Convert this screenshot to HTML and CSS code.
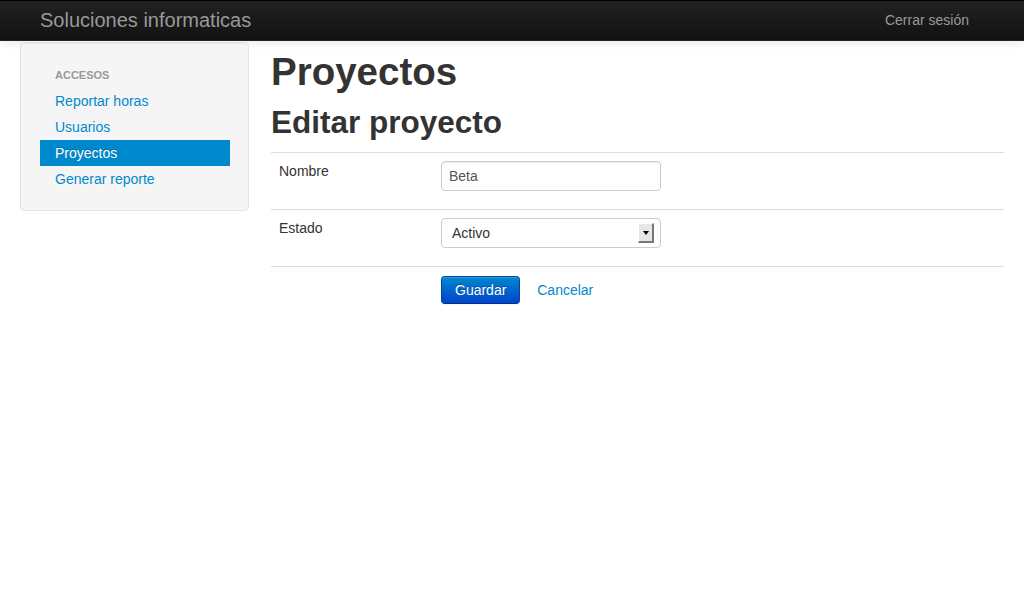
FILE: index.html
```html
<!DOCTYPE html>
<html lang="es">
<head>
<meta charset="utf-8">
<title>Proyectos</title>
<link rel="stylesheet" href="styles.css">
</head>
<body>
<header class="navbar">
  <a class="brand" href="#">Soluciones informaticas</a>
  <a class="nav-link" href="#">Cerrar sesión</a>
</header>
<div class="page">
  <aside class="well">
    <ul class="nav-list">
      <li class="nav-header">Accesos</li>
      <li><a href="#">Reportar horas</a></li>
      <li><a href="#">Usuarios</a></li>
      <li class="active"><a href="#">Proyectos</a></li>
      <li><a href="#">Generar reporte</a></li>
    </ul>
  </aside>
  <main class="content">
    <h1 class="title">Proyectos</h1>
    <h2 class="subtitle">Editar proyecto</h2>
    <form class="form-table">
      <div class="form-row">
        <label class="form-label" for="nombre">Nombre</label>
        <div class="form-field"><input id="nombre" class="input" type="text" value="Beta"></div>
      </div>
      <div class="form-row">
        <label class="form-label" for="estado">Estado</label>
        <div class="form-field">
          <div class="select-wrap">
            <select id="estado" class="select"><option>Activo</option><option>Inactivo</option></select>
            <span class="select-arrow"><span class="tri"></span></span>
          </div>
        </div>
      </div>
      <div class="form-row actions">
        <div class="form-label"></div>
        <div class="form-field">
          <button type="button" class="btn btn-primary">Guardar</button>
          <a class="btn-link" href="#">Cancelar</a>
        </div>
      </div>
    </form>
  </main>
</div>
</body>
</html>
```
FILE: styles.css
```css
* { box-sizing: border-box; }
html, body { margin: 0; padding: 0; }
body {
  font-family: "Liberation Sans", Arial, sans-serif;
  font-size: 14px;
  line-height: 20px;
  color: #333;
  background: #fff;
}
a { text-decoration: none; }

.navbar {
  height: 41px;
  display: flex;
  align-items: center;
  justify-content: space-between;
  padding: 0 55px 0 40px;
  background: linear-gradient(to bottom, #222 0%, #111 100%);
  border-top: 1px solid #000;
  border-bottom: 1px solid #252525;
  box-shadow: 0 1px 10px rgba(0,0,0,0.1);
}
.brand {
  font-size: 20px;
  line-height: 20px;
  color: #999;
  margin-top: -1px;
}
.nav-link {
  color: #999;
  font-size: 14px;
  margin-top: -1px;
}

.page {
  display: grid;
  grid-template-columns: 229px 1fr;
  column-gap: 22px;
  padding: 1px 20px 0 20px;
  align-items: start;
}

.well {
  background: #f5f5f5;
  border: 1px solid #e3e3e3;
  border-radius: 4px;
  box-shadow: inset 0 1px 1px rgba(0,0,0,0.05);
  padding: 19px 18px 18px 19px;
}
.nav-list {
  list-style: none;
  margin: 0;
  padding: 0;
}
.nav-list li { line-height: 20px; }
.nav-header {
  padding: 3px 15px;
  font-size: 11px;
  font-weight: bold;
  text-transform: uppercase;
  color: #999;
  text-shadow: 0 1px 0 rgba(255,255,255,0.5);
}
.nav-list a {
  display: block;
  padding: 3px 15px;
  color: #0088cc;
  text-shadow: 0 1px 0 rgba(255,255,255,0.5);
}
.nav-list .active a {
  background: #0088cc;
  color: #fff;
  text-shadow: 0 -1px 0 rgba(0,0,0,0.2);
}

.content { min-width: 0; }
.title {
  font-size: 38.5px;
  line-height: 40px;
  font-weight: bold;
  margin: 10px 0;
  color: #333;
}
.subtitle {
  font-size: 31.5px;
  line-height: 40px;
  font-weight: bold;
  margin: 10px 0;
  color: #333;
}

.form-table { margin: 0; }
.form-row {
  display: grid;
  grid-template-columns: 170px 1fr;
  border-top: 1px solid #ddd;
}
.form-label {
  padding: 8px;
  line-height: 20px;
}
.form-field {
  padding: 8px 0;
}
.input, .select-wrap {
  display: block;
  width: 220px;
  height: 30px;
  margin-bottom: 10px;
}
.input {
  padding: 4px 7px;
  font-family: "Liberation Sans", Arial, sans-serif;
  font-size: 14px;
  line-height: 20px;
  color: #555;
  border: 1px solid #ccc;
  border-radius: 4px;
  box-shadow: inset 0 1px 1px rgba(0,0,0,0.075);
  background: #fff;
}
.select-wrap { position: relative; }
.select {
  -webkit-appearance: none;
  appearance: none;
  width: 100%;
  height: 30px;
  padding: 4px 10px;
  font-family: "Liberation Sans", Arial, sans-serif;
  font-size: 14px;
  color: #333;
  border: 1px solid #ccc;
  border-radius: 4px;
  background: #fff;
}
.select-arrow {
  position: absolute;
  left: 197px;
  top: 5px;
  width: 16px;
  height: 20px;
  background: #e6e6e6;
  border-top: 1px solid #fff;
  border-left: 1px solid #fff;
  border-right: 2px solid #777;
  border-bottom: 2px solid #777;
  pointer-events: none;
  display: flex;
  align-items: center;
  justify-content: center;
}
.tri {
  width: 0;
  height: 0;
  border-left: 3px solid transparent;
  border-right: 3px solid transparent;
  border-top: 4px solid #000;
  margin-top: 1px;
}

.actions .form-field { padding-top: 9px; }
.btn {
  display: inline-block;
  height: 28px;
  padding: 3px 13px;
  font-family: "Liberation Sans", Arial, sans-serif;
  font-size: 14px;
  line-height: 20px;
  border-radius: 4px;
  vertical-align: middle;
  cursor: pointer;
}
.btn-primary {
  color: #fff;
  text-shadow: 0 -1px 0 rgba(0,0,0,0.25);
  background: linear-gradient(to bottom, #0088cc, #0044cc);
  border: 1px solid #0044a8;
  border-bottom-color: #002f80;
  box-shadow: inset 0 1px 0 rgba(255,255,255,0.2), 0 1px 2px rgba(0,0,0,0.05);
}
.btn-link {
  display: inline-block;
  padding: 4px 12px;
  margin-left: 1px;
  color: #0088cc;
  vertical-align: middle;
}
```
